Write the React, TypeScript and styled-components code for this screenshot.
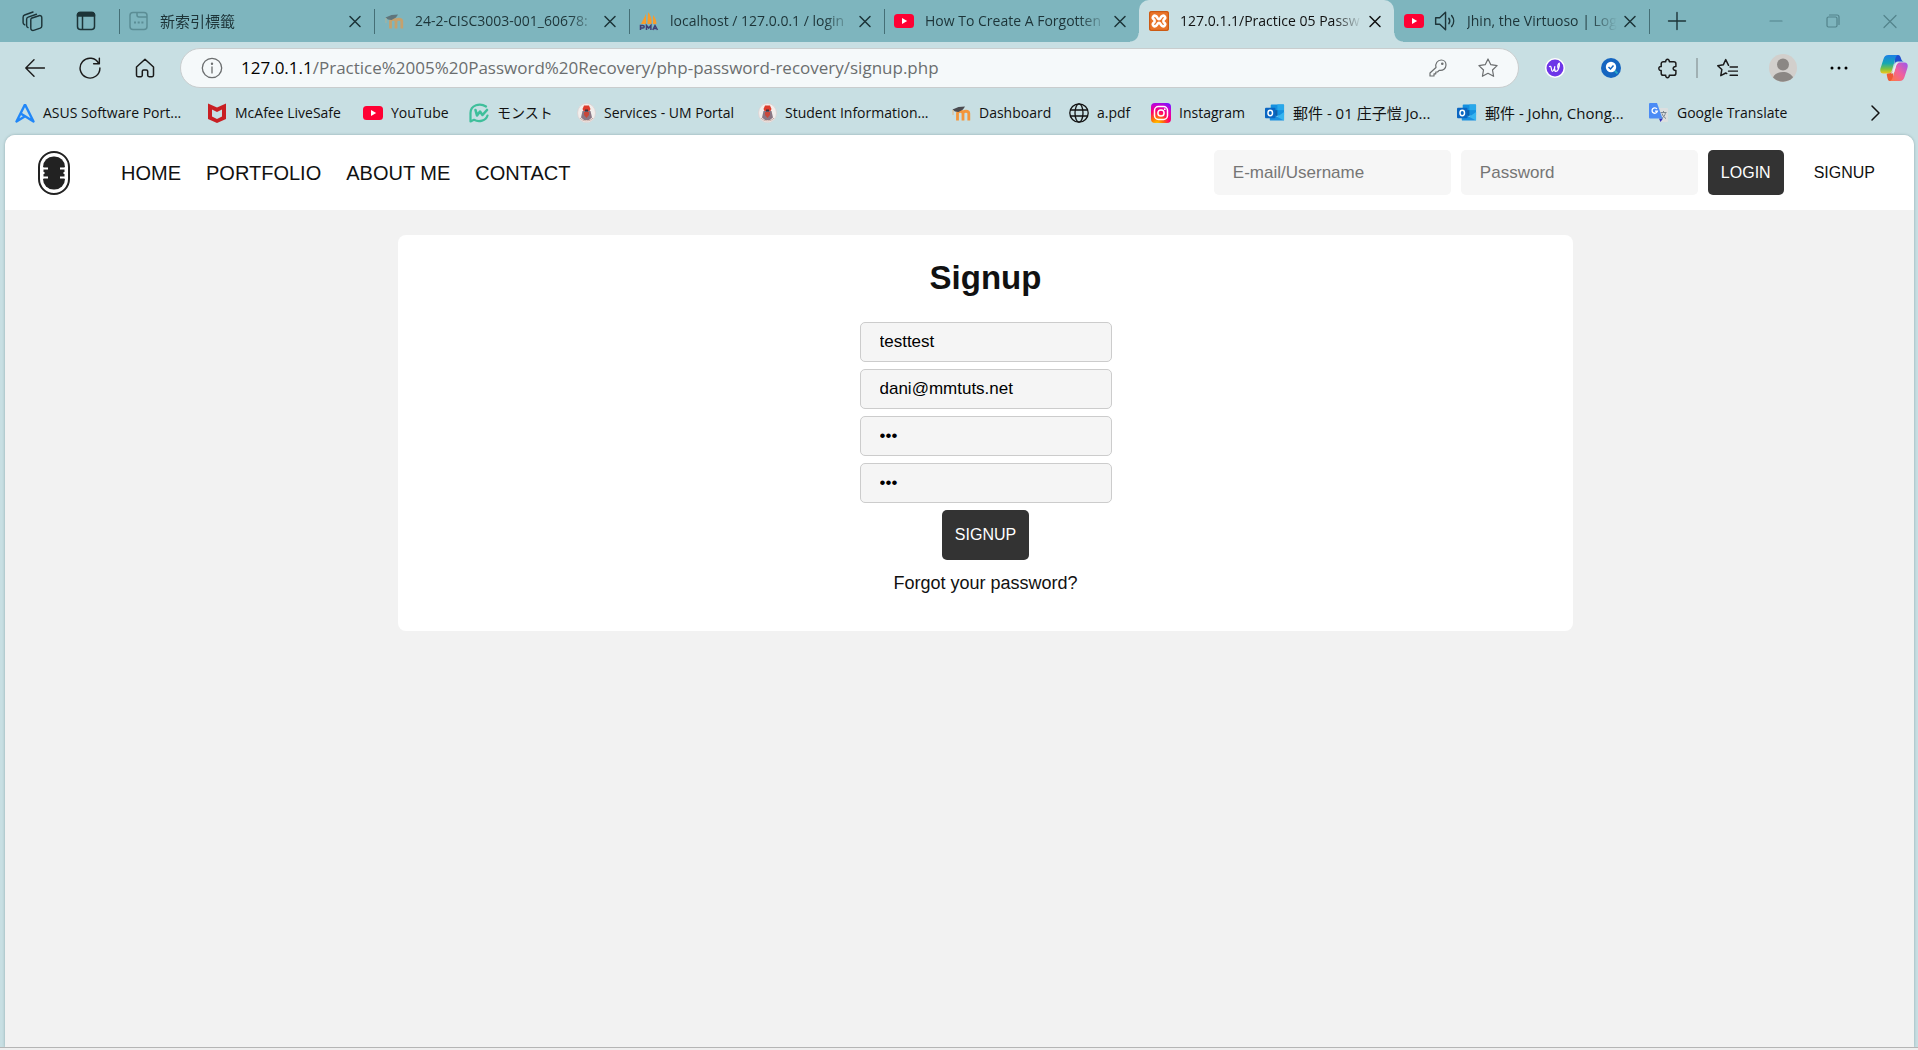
import React from "react";
import styled, { createGlobalStyle, css } from "styled-components";

const ui = `"Open Sans", "Noto Sans CJK TC", "Noto Sans CJK JP", sans-serif`;
const arial = `"Liberation Sans", Arial, sans-serif`;

const Global = createGlobalStyle`
  * { box-sizing: border-box; }
  body { margin: 0; background: #c8dfe3; font-family: ${ui}; }
  button { border: 0; padding: 0; background: none; color: inherit; font: inherit; cursor: pointer; }
  a { color: inherit; text-decoration: none; }
  svg { display: block; flex: none; }
`;

const Window = styled.div`
  min-height: 100vh;
  display: flex;
  flex-direction: column;
  background: #c8dfe3;
`;

/* ---------- tab strip ---------- */
const TabStrip = styled.header`
  display: flex;
  align-items: center;
  height: 42px;
  padding-left: 6px;
  background: #7eb5be;
  color: #1d3438;
`;

const Slot = styled.button<{ $w: number; $h?: number }>`
  flex: none;
  display: flex;
  align-items: center;
  justify-content: center;
  width: ${(p) => p.$w}px;
  height: ${(p) => p.$h ?? 40}px;
`;

const Tabs = styled.div`
  display: flex;
  flex: 0 1 1530px;
  min-width: 0;
  margin-left: 7px;
`;

const TabBox = styled.div<{ $active?: boolean; $line?: boolean }>`
  position: relative;
  flex: 1 1 0;
  min-width: 0;
  display: flex;
  align-items: center;
  height: 42px;
  padding: 0 9px 0 10px;
  font-size: 14px;
  line-height: 20px;
  ${(p) =>
    p.$line &&
    css`
      background: linear-gradient(#456f76, #456f76) 0 9px / 1px 25px no-repeat;
    `}
  ${(p) =>
    p.$active &&
    css`
      background: #c8dfe3;
      color: #111;
      border-radius: 10px 10px 0 0;
      &::before,
      &::after {
        content: "";
        position: absolute;
        bottom: 0;
        width: 9px;
        height: 9px;
      }
      &::before {
        left: -9px;
        background: radial-gradient(circle at 0 0, #7eb5be 8px, #c8dfe3 9px);
      }
      &::after {
        right: -9px;
        background: radial-gradient(circle at 100% 0, #7eb5be 8px, #c8dfe3 9px);
      }
    `}
`;

const TabIcons = styled.span`
  display: flex;
  align-items: center;
  gap: 10px;
`;

const TabTitle = styled.span`
  flex: 1;
  min-width: 0;
  margin: 0 3px 0 11px;
  overflow: hidden;
  white-space: nowrap;
  mask-image: linear-gradient(to right, #000 calc(100% - 28px), transparent);
  &:lang(zh) {
    font-size: 15px;
  }
`;

const NewTab = styled.div`
  display: flex;
  align-items: center;
  flex: 1;
  height: 42px;
  background: linear-gradient(#456f76, #456f76) 0 9px / 1px 25px no-repeat;
`;

const WindowButtons = styled.div`
  display: flex;
  color: #53838b;
`;

/* ---------- toolbar ---------- */
const Toolbar = styled.div`
  display: flex;
  align-items: center;
  height: 52px;
  padding-left: 7px;
  color: #1b1b1b;
`;

const AddressBar = styled.div`
  flex: 1;
  min-width: 0;
  display: flex;
  align-items: center;
  height: 40px;
  margin: 0 11px 0 8px;
  padding: 0 20px;
  border: 1px solid #c9cdce;
  border-radius: 20px;
  background: #f5f9fa;
  color: #6b6e6f;
`;

const Address = styled.div`
  flex: 1;
  min-width: 0;
  margin-left: 18px;
  overflow: hidden;
  white-space: nowrap;
  font-size: 17px;
  line-height: 24px;
`;

const Host = styled.span`
  color: #000;
`;

const BarActions = styled.div`
  display: flex;
  gap: 30px;
`;

const Tools = styled.div`
  display: flex;
  align-items: center;
  gap: 6px;
`;

const ToolLine = styled.span`
  width: 2px;
  height: 20px;
  margin: 0 -2px;
  background: #a0b0b3;
`;

/* ---------- bookmarks ---------- */
const Bookmarks = styled.nav`
  display: flex;
  align-items: center;
  height: 41px;
  padding: 0 32px 4px 15px;
  color: #111;
`;

const Bookmark = styled.a<{ $w: number }>`
  flex: none;
  display: flex;
  align-items: center;
  gap: 8px;
  width: ${(p) => p.$w}px;
  white-space: nowrap;
  font-size: 14px;
  line-height: 20px;
  &:lang(zh) {
    font-size: 15px;
  }
`;

const More = styled.button`
  margin-left: auto;
`;

/* ---------- web page ---------- */
const Page = styled.div`
  flex: 1;
  display: flex;
  flex-direction: column;
  margin: 0 4px 0 5px;
  overflow: hidden;
  border-radius: 10px 10px 0 0;
  background: #f2f2f2;
  box-shadow: 0 0 3px #8fa9ad;
  font-family: ${arial};
  color: #111;
`;

const SiteHeader = styled.div`
  display: flex;
  align-items: center;
  height: 75px;
  padding: 0 39px 0 33px;
  background: #fff;
`;

const SiteNav = styled.nav`
  display: flex;
  gap: 25px;
  margin-left: 51px;
  font-size: 20px;
  line-height: 24px;
`;

const LoginForm = styled.form`
  display: flex;
  align-items: center;
  gap: 10px;
  margin-left: auto;
`;

const LoginInput = styled.input`
  width: 237px;
  height: 45px;
  padding: 0 19px;
  border: 0;
  border-radius: 5px;
  background: #f6f6f6;
  font: 17px ${arial};
  &::placeholder {
    color: #757575;
  }
`;

const DarkButton = styled.button<{ $h: number }>`
  height: ${(p) => p.$h}px;
  padding: 0 13px;
  border-radius: 5px;
  background: #333;
  color: #fff;
  font: 16px ${arial};
`;

const SignupLink = styled.a`
  margin-left: 20px;
  font-size: 16px;
  line-height: 20px;
`;

const Main = styled.main`
  display: flex;
  justify-content: center;
  padding: 25px 0 0 52px;
`;

const Card = styled.section`
  flex: 0 1 1175px;
  display: flex;
  flex-direction: column;
  align-items: center;
  padding: 24px 0 36px;
  border-radius: 8px;
  background: #fff;
`;

const Title = styled.h1`
  margin: 0 0 25px;
  font-size: 33px;
  line-height: 38px;
`;

const SignupForm = styled.form`
  display: flex;
  flex-direction: column;
  align-items: center;
  gap: 7px;
`;

const Field = styled.input`
  width: 252px;
  height: 40px;
  padding: 0 19px;
  border: 1px solid #ccc;
  border-radius: 5px;
  background: #f5f5f5;
  color: #000;
  font: 17px ${arial};
`;

const Forgot = styled.a`
  margin-top: 11px;
  font-size: 18px;
  line-height: 24px;
`;

const BottomEdge = styled.div`
  height: 3px;
  border-top: 1px solid #b5b5b5;
  background: #efefef;
`;

/* ---------- drawings ---------- */
const Line = ({ s = 20, w = 1.3, children }: { s?: number; w?: number; children: React.ReactNode }) => (
  <svg width={s} height={s} viewBox="0 0 20 20" fill="none" stroke="currentColor" strokeWidth={w} strokeLinecap="round" strokeLinejoin="round">
    {children}
  </svg>
);

const CloseIcon = () => <Line s={20} w={1.5}><path d="M5 5.500l10 10M15 5.500l-10 10" /></Line>;

const YouTube = () => (
  <svg width="20" height="20" viewBox="0 0 20 20">
    <rect y="3" width="20" height="14" rx="3.500" fill="#ff0033" />
    <path d="M8 7l5.200 3L8 13z" fill="#fff" />
  </svg>
);

const Moodle = ({ dim }: { dim?: boolean }) => (
  <svg width="20" height="20" viewBox="0 0 20 20" opacity={dim ? 0.6 : 1}>
    <path d="M6.500 17.500V10.500c0-3 5.500-3 5.500 0v7M12 10.500c0-3 5.800-3 5.800 0v7" fill="none" stroke="#f3953a" strokeWidth="2.800" />
    <path d="M1.500 6.500l6-2.500 6.500-.5-2 3-4.500 2.500-3.500-.5z" fill="#4b4b50" />
    <path d="M2 7v5" stroke="#e4ad70" strokeWidth="0.800" />
  </svg>
);

const Sails = () => (
  <svg width="20" height="20" viewBox="0 0 20 20">
    <path d="M7 3v10H2zM9 1c3 3 4 8 3.500 12H8.500zM14 4c2.500 3 3.500 6 3.500 9H14z" fill="#f89c2c" />
    <path d="M1.500 19v-4.500h2.200c2 0 2 2.500 0 2.500H1.500M7.500 19v-4.500l2.200 2.500 2.200-2.500V19M13.800 19l2.200-4.500 2.500 4.500M14.800 17.600h3" fill="none" stroke="#413f75" strokeWidth="1.500" />
  </svg>
);

const Xampp = () => (
  <svg width="20" height="20" viewBox="0 0 20 20">
    <rect width="20" height="20" rx="2" fill="#e9742a" />
    <rect x="0.700" y="0.700" width="18.600" height="18.600" rx="1.500" fill="none" stroke="#c45410" />
    <path d="M7 5.200c-2.500-1.500-4.500 1.600-2 3.300.8.600.8 2.400 0 3-2.500 1.700-.5 4.800 2 3.300 1.600-1 1.500-3 3-3s1.400 2 3 3c2.500 1.500 4.500-1.600 2-3.300-.8-.6-.8-2.400 0-3 2.500-1.700.5-4.800-2-3.300-1.600 1-1.500 3-3 3s-1.400-2-3-3z" fill="none" stroke="#fff" strokeWidth="2.600" />
  </svg>
);

const Outlook = () => (
  <svg width="20" height="20" viewBox="0 0 21 20">
    <rect x="6" y="1" width="14" height="12" rx="1" fill="#1490df" />
    <path d="M13 1h7v6h-7z" fill="#28a8ea" />
    <path d="M6 7h7v6H6z" fill="#0f5ea8" />
    <path d="M5 9l8 5 7-5v8a1 1 0 0 1-1 1H6a1 1 0 0 1-1-1z" fill="#1b8fe0" />
    <path d="M20 9v9l-10-5.500 3 1.500z" fill="#35b4f0" />
    <rect y="4.500" width="11" height="11" rx="1" fill="#0a66c2" />
    <ellipse cx="5.500" cy="10" rx="2.400" ry="2.800" fill="none" stroke="#fff" strokeWidth="1.500" />
  </svg>
);

const Crest = () => (
  <svg width="19" height="20" viewBox="0 0 19 20">
    <ellipse cx="9.500" cy="10" rx="9" ry="9.600" fill="#f2eeec" stroke="#ddd3d3" strokeWidth="0.800" />
    <path d="M5.500 6l1.500-3.500h5L13.500 6l-1 2h-6z" fill="#de3c2d" />
    <path d="M4 14.500L5.500 8h8l1.500 6.500-3 2.500H7z" fill="#8a7683" />
    <path d="M7 9h5v3l-2.500 3L7 12z" fill="#c9473a" />
    <path d="M8 6.500h3v2H8z" fill="#3b3340" />
    <path d="M3 15c3 3.800 10 3.800 13 0" fill="none" stroke="#c9a9a2" />
  </svg>
);

const Instagram = () => (
  <svg width="20" height="20" viewBox="0 0 20 20">
    <defs>
      <radialGradient id="ig" cx="0.300" cy="1.050" r="1.150">
        <stop offset="0" stopColor="#ffd600" />
        <stop offset="0.250" stopColor="#ff7a00" />
        <stop offset="0.550" stopColor="#ff0069" />
        <stop offset="0.800" stopColor="#d300c5" />
        <stop offset="1" stopColor="#7a12ff" />
      </radialGradient>
    </defs>
    <rect width="20" height="20" rx="4" fill="url(#ig)" />
    <rect x="3.500" y="3.500" width="13" height="13" rx="4" fill="none" stroke="#fff" strokeWidth="1.500" />
    <circle cx="10" cy="10" r="3.100" fill="none" stroke="#fff" strokeWidth="1.500" />
    <circle cx="13.800" cy="6.200" r="0.900" fill="#fff" />
  </svg>
);

const Translate = () => (
  <svg width="20" height="20" viewBox="0 0 20 20">
    <path d="M8 5h10a1 1 0 0 1 1 1v12a1 1 0 0 1-1 1h-6z" fill="#dcdfe0" />
    <path d="M11.500 9.500h6M14.500 8v1.500M16.500 9.500c-.5 3-2 5-4 6M13 10.500c.7 2 2 4 4 5" fill="none" stroke="#7b8690" />
    <path d="M10 15.500h4L11.500 19z" fill="#3330b8" />
    <path d="M1 0h7l5.500 15.500H1a1 1 0 0 1-1-1V1a1 1 0 0 1 1-1z" fill="#4b8bf5" />
    <path d="M8 6A2.700 2.700 0 1 0 8.400 8.200H6" fill="none" stroke="#fff" strokeWidth="1.300" />
  </svg>
);

const Asus = () => (
  <svg width="20" height="20" viewBox="0 0 20 20" fill="none" stroke="#2187f8" strokeWidth="2.400" strokeLinejoin="round">
    <path d="M10 1.500L1.500 18.500l9-5.500M10 1.500l8.500 17-12-7.500" />
  </svg>
);

const McAfee = () => (
  <svg width="20" height="20" viewBox="0 0 20 20">
    <path d="M1 .5l9 4 9-4V16l-9 4-9-4zM5 6.500v7l5 2.500 5-2.500v-7L10 9z" fill="#c91f23" fillRule="evenodd" />
  </svg>
);

const Monst = () => (
  <svg width="20" height="20" viewBox="0 0 20 20" fill="none" stroke="#3fbf9b" strokeWidth="2.200" strokeLinecap="round" strokeLinejoin="round">
    <path d="M17 3.500C11-.5 1.500 2 1.500 10v8.500L5 16.800c5 2.700 12 1 13.500-4.300" />
    <path d="M6.500 7l1.500 5.500 3-4 2.500 3.500L18 7" strokeWidth="2.600" />
  </svg>
);

const Globe = () => (
  <Line w={1.300}>
    <circle cx="10" cy="10" r="9.200" />
    <ellipse cx="10" cy="10" rx="4" ry="9.200" />
    <path d="M1.500 7h17M1.500 13h17" />
  </Line>
);

const Copilot = () => (
  <svg width="28" height="28" viewBox="0 0 28 28">
    <defs>
      <linearGradient id="cpA" x1="0" y1="0" x2="0" y2="1">
        <stop offset="0" stopColor="#1b7fe6" />
        <stop offset="0.450" stopColor="#16a7b4" />
        <stop offset="0.750" stopColor="#7cc242" />
        <stop offset="1" stopColor="#f5c518" />
      </linearGradient>
      <linearGradient id="cpB" x1="1" y1="0" x2="0" y2="1">
        <stop offset="0" stopColor="#9b55ee" />
        <stop offset="0.500" stopColor="#f0609e" />
        <stop offset="1" stopColor="#ff7a3c" />
      </linearGradient>
    </defs>
    <path d="M15 1h3c2 0 2.500 2 3 3.500.5 2 1.500 3 3 3h-6c-2 0-3 1-3.500 3z" fill="#1f4fd0" />
    <path d="M8.500 1H18c-1.500.5-2.200 2-2.800 4l-3 10.500c-.7 2.500-1.500 4-4.200 4H3.500C.5 19.500-.3 17 .6 14L3.500 5C4.400 2.300 5.500 1 8.500 1z" fill="url(#cpA)" />
    <path d="M13 27H9.500c-1.500 0-2-3-2.500-5-.3-1.500-.5-2.500 1-2.500 3 0 4.500-1 5-3z" fill="#ee5a34" />
    <path d="M19.500 27H10c1.500-.5 2.200-2 2.800-4l3-10.500c.7-2.500 1.500-4 4.200-4h4.500c3 0 3.800 2.500 2.900 5.500l-2.900 9c-.9 2.700-2 4-5 4z" fill="url(#cpB)" />
    <path d="M15.500 10.500c.6-1.500 1.500-2 3.500-2-1.800.8-2.500 2-3.200 4.500l-1.500 5c-.5 1.300-1.500 1.700-3.300 1.700 1-.8 1.500-2 2-4z" fill="#e8f1f2" />
  </svg>
);

const MicLogo = () => (
  <svg width="32" height="44" viewBox="0 0 32 44">
    <rect x="1" y="1" width="30" height="42" rx="15" fill="#fff" stroke="#222" strokeWidth="2" />
    <rect x="5" y="5.500" width="22" height="33" rx="10.500" fill="#222" />
    <path d="M4 17.500h6M4 22h2.500M4 26.500h6M22 17.500h6M25.500 22H28M22 26.500h6" stroke="#fff" strokeWidth="2" />
    <path d="M5 16v12M27 16v12" stroke="#fff" strokeWidth="1" />
  </svg>
);

const NewTabIcon = () => (
  <svg width="20" height="20" viewBox="0 0 20 20" fill="none" stroke="#5b8d95" strokeWidth="1.500">
    <rect x="1" y="1.500" width="17" height="17" rx="3" />
    <path d="M8 1.500v2.500a2 2 0 0 0 2 2h8" />
    <path d="M5 11.500h2M8.700 11.500h2M12.400 11.500h2" strokeWidth="2" />
  </svg>
);

const Speaker = () => (
  <Line s={22}>
    <path d="M1.500 7v6h3.700l5.300 5V2L5.200 7zM13.500 7.500c1 1.500 1 3.500 0 5M16 5c2.500 3 2.500 7 0 10" />
  </Line>
);

type TabInfo = { title: string; icon: React.ReactNode; lang?: string; active?: boolean; line?: boolean; sound?: boolean };

const tabs: TabInfo[] = [
  { title: "新索引標籤", icon: <NewTabIcon />, lang: "zh", line: true },
  { title: "24-2-CISC3003-001_60678:", icon: <Moodle dim />, line: true },
  { title: "localhost / 127.0.0.1 / login", icon: <Sails />, line: true },
  { title: "How To Create A Forgotten", icon: <YouTube />, line: true },
  { title: "127.0.1.1/Practice 05 Passw", icon: <Xampp />, active: true },
  { title: "Jhin, the Virtuoso | Log", icon: <YouTube />, sound: true },
];

const bookmarks = [
  { text: "ASUS Software Port...", icon: <Asus />, w: 192 },
  { text: "McAfee LiveSafe", icon: <McAfee />, w: 156 },
  { text: "YouTube", icon: <YouTube />, w: 106 },
  { text: "モンスト", icon: <Monst />, w: 108 },
  { text: "Services - UM Portal", icon: <Crest />, w: 181 },
  { text: "Student Information...", icon: <Crest />, w: 193 },
  { text: "Dashboard", icon: <Moodle />, w: 118 },
  { text: "a.pdf", icon: <Globe />, w: 82 },
  { text: "Instagram", icon: <Instagram />, w: 114 },
  { text: "郵件 - 01 庄子愷 Jo...", icon: <Outlook />, lang: "zh", w: 192 },
  { text: "郵件 - John, Chong...", icon: <Outlook />, lang: "zh", w: 192 },
  { text: "Google Translate", icon: <Translate />, w: 150 },
];

export default function App() {
  return (
    <Window>
      <Global />
      <TabStrip>
        <Slot $w={53} aria-label="Workspaces">
          <Line s={22}>
            <path d="M8.500 7.500l7-2.300c1.300-.4 2.500.3 2.500 1.800v7.500c0 1-.5 1.600-1.400 2l-6 2c-1.300.4-2.600-.3-2.600-1.800V9c0-.8.200-1.200.5-1.500z" />
            <path d="M5.500 16c-1-.3-1.300-1-1.300-2V8.500c0-1 .5-1.700 1.400-2l7.500-2.600M2.500 13.500C1.500 13 1 12.500 1 11.500V6.500c0-1 .5-1.700 1.400-2l7.600-2.700" />
          </Line>
        </Slot>
        <Slot $w={53} aria-label="Tab actions">
          <Line w={1.500}>
            <rect x="1.500" y="1.500" width="17" height="17" rx="3" />
            <path d="M1.500 5V3.500l1.500-2h14l1.500 2V5z" fill="currentColor" />
            <path d="M6.500 5v13" />
          </Line>
        </Slot>
        <Tabs>
          {tabs.map((t) => (
            <TabBox key={t.title} $active={t.active} $line={t.line}>
              <TabIcons>
                {t.icon}
                {t.sound && <Speaker />}
              </TabIcons>
              <TabTitle lang={t.lang}>{t.title}</TabTitle>
              <button aria-label="Close tab"><CloseIcon /></button>
            </TabBox>
          ))}
        </Tabs>
        <NewTab>
          <Slot $w={56} aria-label="New tab"><Line s={20} w={1.400}><path d="M10 1.500v17M1.500 10h17" /></Line></Slot>
        </NewTab>
        <WindowButtons>
          <Slot $w={57} aria-label="Minimize"><Line w={1.200}><path d="M4 10h12" /></Line></Slot>
          <Slot $w={57} aria-label="Restore">
            <Line w={1.200}><rect x="4" y="6" width="10" height="10" rx="1.500" /><path d="M6.500 4h7.500a2 2 0 0 1 2 2v7.500" /></Line>
          </Slot>
          <Slot $w={57} aria-label="Close"><Line w={1.200}><path d="M4 4.500l12 12M16 4.500l-12 12" /></Line></Slot>
        </WindowButtons>
      </TabStrip>

      <Toolbar>
        <Slot $w={55} aria-label="Back"><Line w={1.400}><path d="M19.500 10H1M9 1.800L.8 10 9 18.200" /></Line></Slot>
        <Slot $w={55} aria-label="Refresh"><Line s={22} w={1.300}><path d="M18 6A9 9 0 1 0 19 10M18.500 1v5.200h-5.200" /></Line></Slot>
        <Slot $w={55} aria-label="Home">
          <Line s={20} w={1.500}><path d="M1.500 9L10 1.200 18.500 9v8.300a1.400 1.400 0 0 1-1.400 1.400h-3a1.400 1.400 0 0 1-1.400-1.400v-4a1.400 1.400 0 0 0-1.400-1.400H8.700a1.400 1.400 0 0 0-1.400 1.400v4a1.400 1.400 0 0 1-1.400 1.400h-3a1.400 1.400 0 0 1-1.400-1.400z" /></Line>
        </Slot>
        <AddressBar>
          <Line s={22} w={1.200}><circle cx="10" cy="10" r="8.800" /><path d="M10 9v5.500" /><circle cx="10" cy="6.200" r="0.500" /></Line>
          <Address role="textbox" aria-label="Address">
            <Host>127.0.1.1</Host>/Practice%2005%20Password%20Recovery/php-password-recovery/signup.php
          </Address>
          <BarActions>
            <button aria-label="Saved passwords">
              <Line w={1.200}><path d="M8 9.500c-1-4 1.500-7.500 5.300-7.500C16 2 18 4.200 18 7c0 3.500-3 6-6.800 5.300L9.500 14H7.800v1.800H6V18H2v-3z" /><circle cx="14.300" cy="5.800" r="0.700" /></Line>
            </button>
            <button aria-label="Add to favorites">
              <Line w={1.200}><path d="M10 1l2.800 5.700 6.300.9-4.600 4.400 1.100 6.300-5.600-3-5.600 3 1.100-6.300L.9 7.600l6.300-.9z" /></Line>
            </button>
          </BarActions>
        </AddressBar>
        <Tools>
          <Slot $w={50} aria-label="Writing extension">
            <svg width="20" height="20" viewBox="0 0 20 20">
              <circle cx="10" cy="10" r="10" fill="#fff" />
              <circle cx="10" cy="10" r="8.500" fill="#6d35e8" />
              <path d="M4.500 8.500c2.500-1.500 1.500 5 2.800 5s2.700-5 2.500-5-1 5 1 5c2.500 0 4-5.500 3.500-8.500-1 0-2.500 4-1 6" fill="none" stroke="#fff" strokeWidth="1.200" strokeLinecap="round" />
            </svg>
          </Slot>
          <Slot $w={50} aria-label="Checker extension">
            <svg width="20" height="20" viewBox="0 0 20 20">
              <circle cx="10" cy="10" r="10" fill="#1565c0" />
              <path d="M13.500 12.500l3 3" stroke="#26a5c8" strokeWidth="2" />
              <circle cx="10" cy="9" r="5.200" fill="#fff" />
              <path d="M7.500 9l2 2 3-3.500" fill="none" stroke="#1565c0" strokeWidth="1.500" />
            </svg>
          </Slot>
          <Slot $w={50} aria-label="Extensions">
            <Line s={21} w={1.400}><path d="M6 3.500h2.300c-.4-3 3.800-3 3.400 0H16a2 2 0 0 1 2 2v2.700c-3.500-.4-3.500 4 0 3.600v2.700a2 2 0 0 1-2 2h-4.300c.4 3-3.800 3-3.400 0H6a2 2 0 0 1-2-2v-2.700c-3 .4-3-4 0-3.600V5.500a2 2 0 0 1 2-2z" /></Line>
          </Slot>
          <ToolLine />
          <Slot $w={50} aria-label="Favorites">
            <Line s={21} w={1.400}><path d="M11 7L8.300 1.500 6 6.500l-5.300.8L4.600 11l-1 5.800 4.700-2.500 1 .5M12.500 8.500h7M11 12.500h8.500M12.500 16.500h7" /></Line>
          </Slot>
          <Slot $w={50} aria-label="Profile">
            <svg width="28" height="28" viewBox="0 0 28 28">
              <circle cx="14" cy="14" r="14" fill="#d2cfcc" />
              <circle cx="14" cy="10.500" r="6" fill="#8b8784" />
              <path d="M4 23.500c3-7.500 17-7.500 20 0C19 29 9 29 4 23.500z" fill="#8b8784" />
            </svg>
          </Slot>
          <Slot $w={50} aria-label="Settings">
            <svg width="18" height="4" viewBox="0 0 18 4"><circle cx="2" cy="2" r="1.500" /><circle cx="9" cy="2" r="1.500" /><circle cx="16" cy="2" r="1.500" /></svg>
          </Slot>
          <Slot $w={48} aria-label="Copilot"><Copilot /></Slot>
        </Tools>
      </Toolbar>

      <Bookmarks>
        {bookmarks.map((b) => (
          <Bookmark key={b.text} href="#" lang={b.lang} $w={b.w}>{b.icon}{b.text}</Bookmark>
        ))}
        <More aria-label="More bookmarks"><Line s={20} w={1.500}><path d="M6 3l7 7-7 7" /></Line></More>
      </Bookmarks>

      <Page>
        <SiteHeader>
          <a href="#" aria-label="Site logo"><MicLogo /></a>
          <SiteNav>
            <a href="#">HOME</a>
            <a href="#">PORTFOLIO</a>
            <a href="#">ABOUT ME</a>
            <a href="#">CONTACT</a>
          </SiteNav>
          <LoginForm>
            <LoginInput type="text" placeholder="E-mail/Username" aria-label="E-mail/Username" />
            <LoginInput type="password" placeholder="Password" aria-label="Password" />
            <DarkButton type="button" $h={45}>LOGIN</DarkButton>
            <SignupLink href="#">SIGNUP</SignupLink>
          </LoginForm>
        </SiteHeader>
        <Main>
          <Card>
            <Title>Signup</Title>
            <SignupForm>
              <Field type="text" defaultValue="testtest" aria-label="Username" />
              <Field type="text" defaultValue="dani@mmtuts.net" aria-label="E-mail" />
              <Field type="password" defaultValue="123" aria-label="Password" />
              <Field type="password" defaultValue="123" aria-label="Repeat password" />
              <DarkButton type="button" $h={50}>SIGNUP</DarkButton>
            </SignupForm>
            <Forgot href="#">Forgot your password?</Forgot>
          </Card>
        </Main>
      </Page>
      <BottomEdge />
    </Window>
  );
}
